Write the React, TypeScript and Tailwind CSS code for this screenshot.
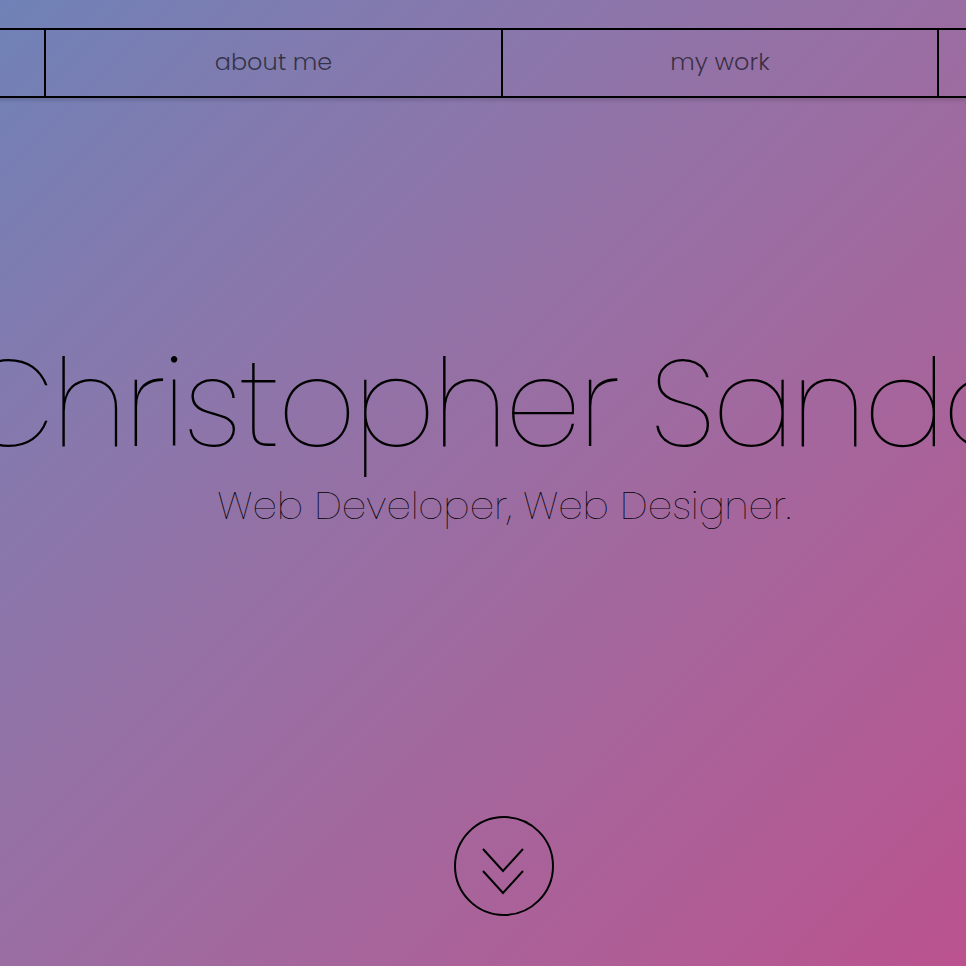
import React from 'react'

const navItems = [
    { label: 'home', width: 'w-[403px]' },
    { label: 'about me', width: 'w-[457px]' },
    { label: 'my work', width: 'w-[436px]' },
    { label: 'contact', width: 'w-[424px]' },
]

const ScrollDown = () => (
    <button className="w-[100px] h-[100px] rounded-full border-2 border-black flex items-center justify-center">
        <svg width="100" height="100" viewBox="0 0 100 100" fill="none" stroke="black" strokeWidth="2" className="shrink-0">
            <polyline points="29,33 49,55 69,33" />
            <polyline points="29,55 49,77 69,55" />
        </svg>
    </button>
)

const App = () => {
    return (
        <div className="w-full h-[966px] overflow-hidden bg-linear-to-br from-[#6f82b7] to-[#ba528e] font-['Poppins','Inter','Lato',sans-serif]">
            <div className="w-[1008px] flex flex-col items-center pt-[28px]">
                <nav className="flex self-start -ml-[359px] h-[70px] border-y-2 border-black shadow-[0_3px_3px_rgba(0,0,0,0.12)]">
                    {navItems.map((item, i) => (
                        <a key={item.label} href="#" className={`${item.width} ${i > 0 ? 'border-l-2 border-black' : ''} shrink-0 flex items-center justify-center pb-[2px] text-[24px] font-light text-black/60`}>
                            {item.label}
                        </a>
                    ))}
                </nav>
                <h1 className="mt-[245px] self-start -ml-[39px] whitespace-nowrap text-[122px] leading-none font-extralight tracking-[-2.8px] text-black">
                    Christopher Sandoval
                </h1>
                <p className="mt-[21px] whitespace-nowrap text-[39px] leading-none font-extralight text-black">
                    Web Developer, Web Designer.
                </p>
                <div className="mt-[291px]">
                    <ScrollDown />
                </div>
            </div>
        </div>
    )
}

export default App
